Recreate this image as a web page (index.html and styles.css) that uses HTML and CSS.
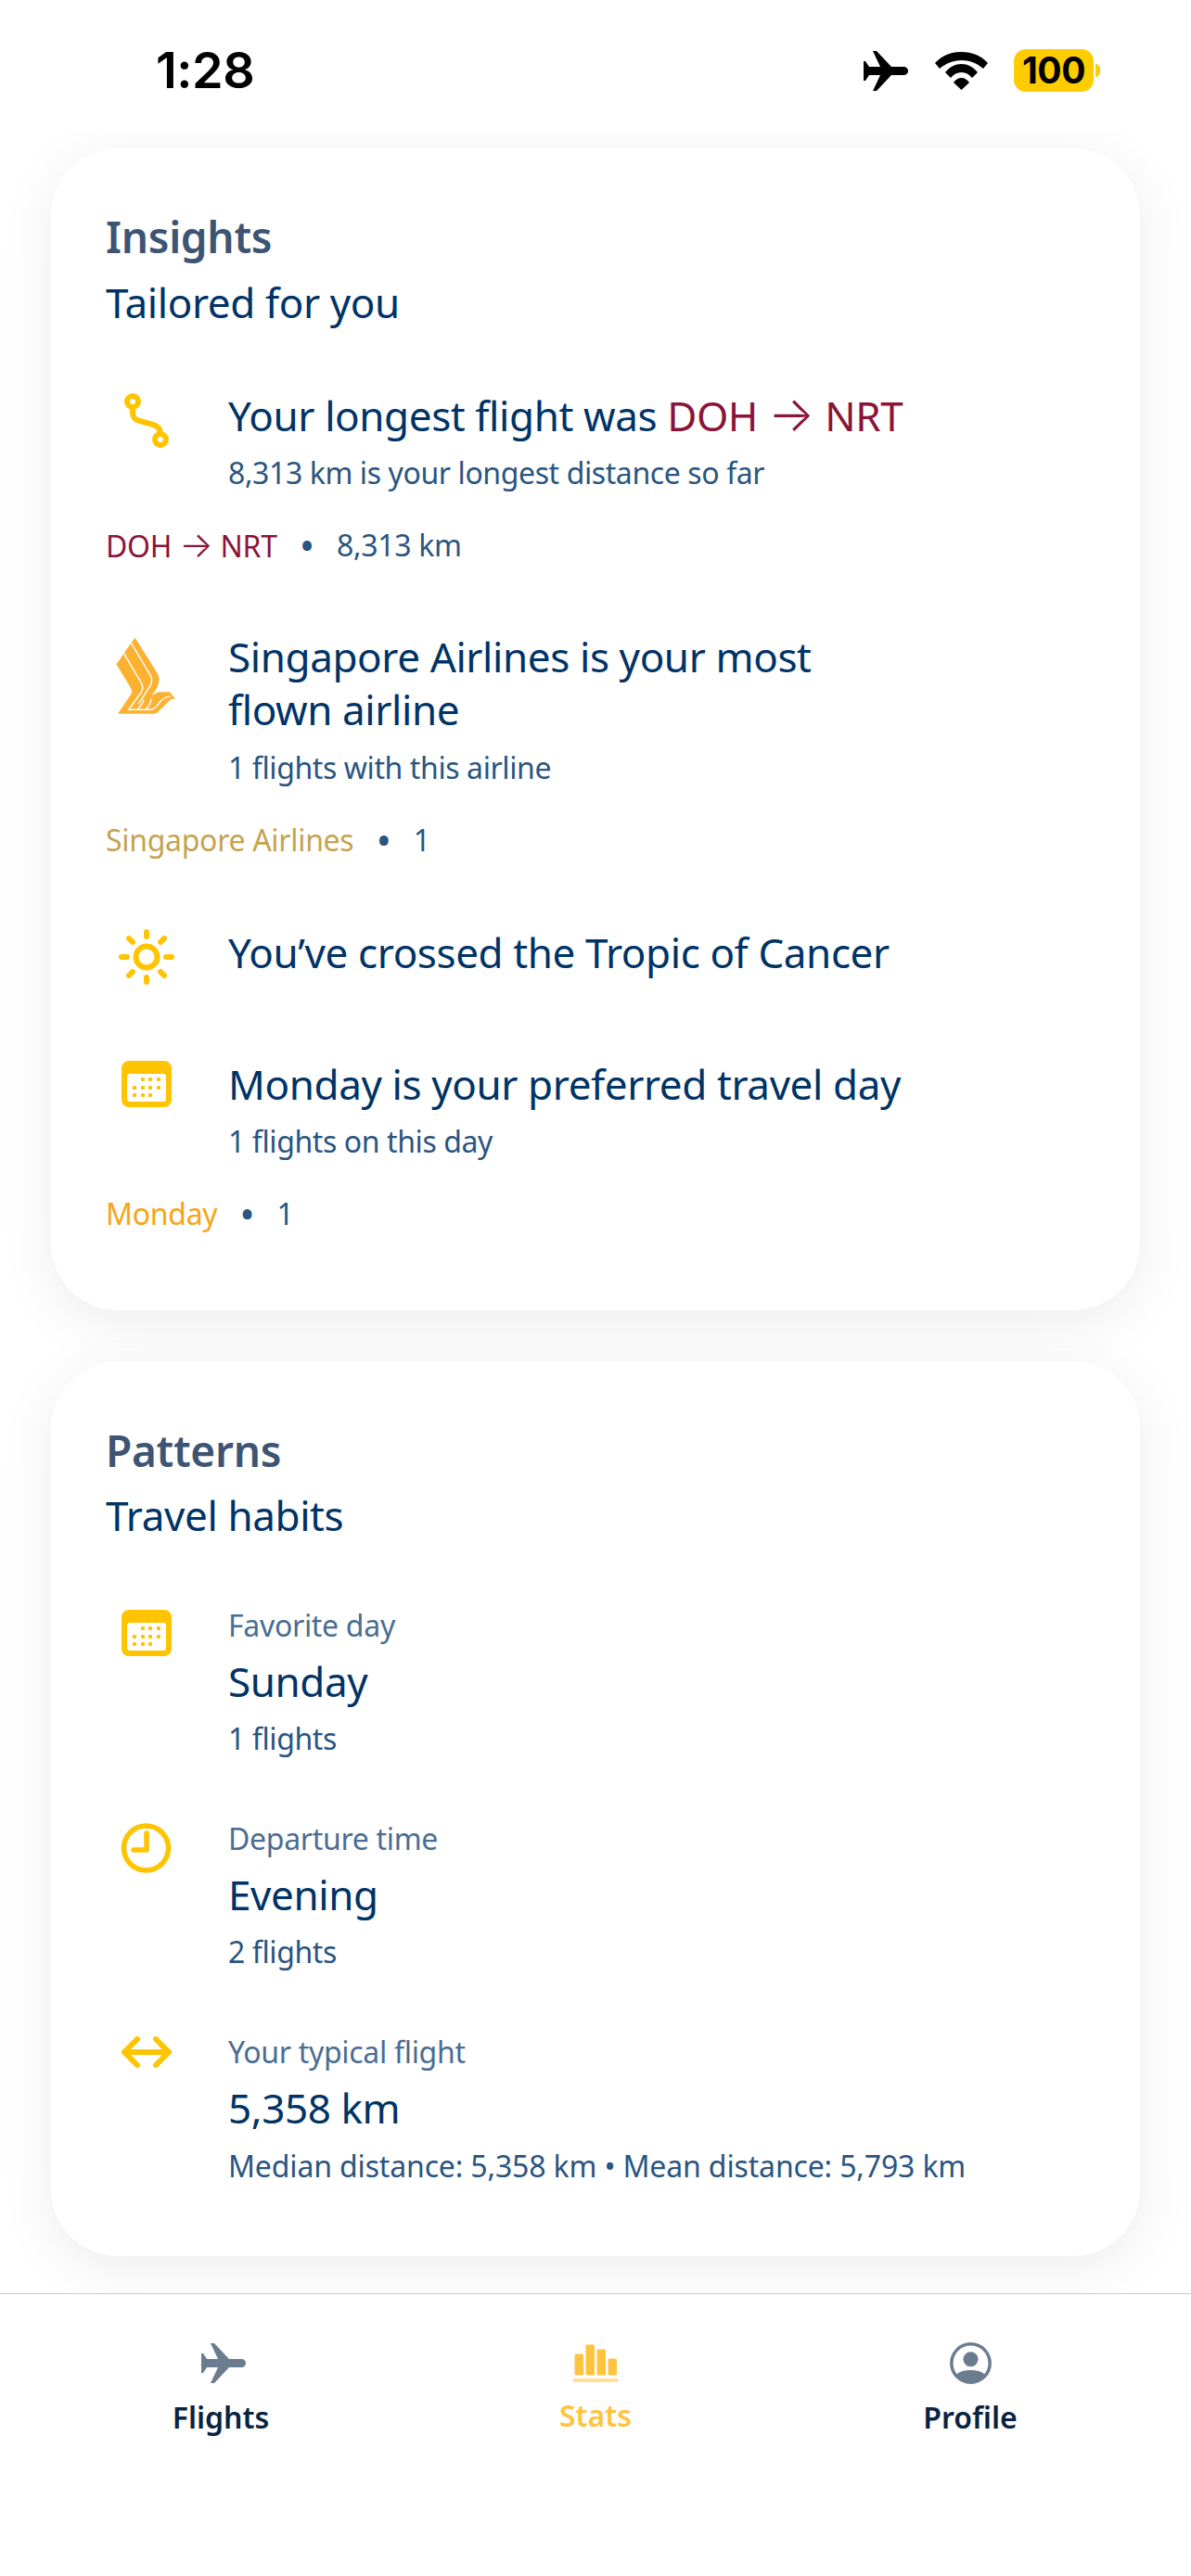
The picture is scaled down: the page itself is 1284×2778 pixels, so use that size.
FILE: index.html
```html
<!DOCTYPE html>
<html lang="en">
<head>
<meta charset="utf-8">
<title>Stats</title>
<link rel="stylesheet" href="styles.css">
</head>
<body>
<div class="app">
  <header class="status">
    <span class="time">1:28</span>
    <div class="status-icons">
      <svg class="st-plane" viewBox="0 0 50 45"><path d="M11 1h4l16 17h13c3 0 5 2 5 4.500S47 27 44 27H31L15 44h-4l8-17H7l-4 6H1V12h2l4 6h12z"/></svg>
      <svg class="st-wifi" viewBox="0 0 57 41"><path d="M0 12C7 4 17 0 28.500 0S50 4 57 12l-5 6C45 12 37 9 28.500 9S12 12 5 18zM11 22c5-6 11-9 17.500-9S41 16 46 22l-6 6c-3-4-7-6-11.500-6S20 24 17 28zM20 33c2-3 5-5 8.500-5s6.500 2 8.500 5l-8.500 8z"/></svg>
      <span class="battery">100</span>
      <span class="battery-nub"></span>
    </div>
  </header>

  <main class="scroll">
    <section class="card card-insights">
      <h2 class="card-title">Insights</h2>
      <p class="card-sub">Tailored for you</p>

      <div class="row row-a">
        <div class="icon icon-top">
          <svg width="50" height="60" viewBox="0 0 50 60" fill="none" stroke="#ffc400" stroke-width="6"><circle cx="10" cy="10" r="6"/><circle cx="40" cy="51" r="6"/><path d="M10 16v6c0 6 3 8 8 9l14 4c5 1.500 8 4 8 10"/></svg>
        </div>
        <div class="body">
          <div class="title">Your longest flight was <span class="maroon">DOH <span class="arrow">→</span> NRT</span></div>
          <div class="sub sub-mid">8,313 km is your longest distance so far</div>
        </div>
      </div>
      <div class="chip"><span class="maroon">DOH <span class="arrow">→</span> NRT</span><span class="dot">•</span><span>8,313 km</span></div>

      <div class="row row-b">
        <div class="icon">
          <svg width="90" height="100" viewBox="0 0 270 300"><path fill="#fdb131" d="M97 20 172 140Q182 160 170 185L150 215Q165 200 185 200H212L230 222 216 224 170 268Q165 272 155 272H40L85 205Q88 195 82 185L35 108 48 90 60 72 72 55 84 38Z"/><path fill="none" stroke="#fff" stroke-width="4.500" d="M84 38 148 145Q156 160 148 178L108 240M60 72 118 170Q126 185 118 200L76 258H150Q165 255 180 232 190 218 215 214M132 258Q150 240 150 222M105 258Q122 240 126 226"/></svg>
        </div>
        <div class="body">
          <div class="title title-tall">Singapore Airlines is your most<br>flown airline</div>
          <div class="sub sub-mid">1 flights with this airline</div>
        </div>
      </div>
      <div class="chip"><span class="gold">Singapore Airlines</span><span class="dot">•</span><span>1</span></div>

      <div class="row row-c">
        <div class="icon icon-top">
          <svg width="60" height="60" viewBox="0 0 60 60" fill="none" stroke="#ffc400" stroke-width="6" stroke-linecap="round"><circle cx="30" cy="30" r="11.500"/><path d="M30 3v5M30 52v5M3 30h6M51 30h6M11 10l4 4M49 10l-4 4M11 50l4-4M49 50l-4-4"/></svg>
        </div>
        <div class="body"><div class="title">You’ve crossed the Tropic of Cancer</div></div>
      </div>

      <div class="row row-d">
        <div class="icon icon-top">
          <svg width="54" height="50" viewBox="0 0 54 50"><use href="#cal"/></svg>
        </div>
        <div class="body">
          <div class="title">Monday is your preferred travel day</div>
          <div class="sub sub-mid">1 flights on this day</div>
        </div>
      </div>
      <div class="chip"><span class="orange">Monday</span><span class="dot">•</span><span>1</span></div>
    </section>

    <section class="card card-patterns">
      <h2 class="card-title">Patterns</h2>
      <p class="card-sub">Travel habits</p>

      <div class="stat stat-first">
        <div class="icon icon-top">
          <svg width="54" height="50" viewBox="0 0 54 50"><use href="#cal"/></svg>
        </div>
        <div class="body">
          <div class="label">Favorite day</div>
          <div class="title">Sunday</div>
          <div class="sub">1 flights</div>
        </div>
      </div>
      <div class="stat">
        <div class="icon icon-top">
          <svg width="56" height="54" viewBox="0 0 56 54" fill="none" stroke="#ffc400" stroke-width="5.500" stroke-linecap="round" stroke-linejoin="round"><circle cx="27.500" cy="27" r="24"/><path d="M28 11v18H14"/></svg>
        </div>
        <div class="body">
          <div class="label">Departure time</div>
          <div class="title">Evening</div>
          <div class="sub">2 flights</div>
        </div>
      </div>
      <div class="stat">
        <div class="icon icon-top">
          <svg width="54" height="34" viewBox="0 0 54 34" fill="none" stroke="#ffc400" stroke-width="6" stroke-linecap="round" stroke-linejoin="round"><path d="M3 17h48M17 3 3 17l14 14M37 3l14 14-14 14"/></svg>
        </div>
        <div class="body">
          <div class="label">Your typical flight</div>
          <div class="title">5,358 km</div>
          <div class="sub sub-long">Median distance: 5,358 km • Mean distance: 5,793 km</div>
        </div>
      </div>
    </section>
  </main>

  <nav class="tabs">
    <div class="tab">
      <svg class="tab-icon tab-icon-plane" width="50" height="45" viewBox="0 0 50 45" fill="#6b7c8e"><path d="M11 1h4l16 17h13c3 0 5 2 5 4.500S47 27 44 27H31L15 44h-4l8-17H7l-4 6H1V12h2l4 6h12z"/></svg>
      <span class="tab-label">Flights</span>
    </div>
    <div class="tab tab-active">
      <svg class="tab-icon" width="50" height="45" viewBox="0 0 50 45" fill="#ffc33f"><rect x="2.500" y="12.500" width="9.500" height="23" rx="1.500"/><rect x="14.500" y="2.500" width="9.500" height="33" rx="1.500"/><rect x="26.500" y="7.500" width="9.500" height="28" rx="1.500"/><rect x="38.500" y="17.500" width="9.500" height="18" rx="1.500"/><rect x=".5" y="39" width="49" height="4" rx="2" opacity=".55"/></svg>
      <span class="tab-label">Stats</span>
    </div>
    <div class="tab">
      <svg class="tab-icon" width="45" height="45" viewBox="0 0 45 45"><circle cx="22.500" cy="22.500" r="20.700" fill="none" stroke="#6b7c8e" stroke-width="3.500"/><circle cx="22.500" cy="18.300" r="8" fill="#6b7c8e"/><path d="M5.700 36C9 32 15 30 22.500 30S36 32 39.300 36A22.500 22.500 0 0 1 5.700 36z" fill="#6b7c8e"/></svg>
      <span class="tab-label">Profile</span>
    </div>
  </nav>
</div>

<svg class="defs" width="0" height="0">
  <symbol id="cal" viewBox="0 0 54 50">
    <path fill="#ffc400" fill-rule="evenodd" d="M8 0h38a8 8 0 0 1 8 8v34a8 8 0 0 1-8 8H8a8 8 0 0 1-8-8V8a8 8 0 0 1 8-8zm-2 17v24a3 3 0 0 0 3 3h36a3 3 0 0 0 3-3V17a3 3 0 0 0-3-3H9a3 3 0 0 0-3 3z"/>
    <g fill="#ffc400"><rect x="21" y="18" width="4" height="4" rx="1"/><rect x="29" y="18" width="4" height="4" rx="1"/><rect x="38" y="18" width="4" height="4" rx="1"/><rect x="12" y="27" width="4" height="4" rx="1"/><rect x="21" y="27" width="4" height="4" rx="1"/><rect x="29" y="27" width="4" height="4" rx="1"/><rect x="38" y="27" width="4" height="4" rx="1"/><rect x="12" y="35" width="4" height="4" rx="1"/><rect x="21" y="35" width="4" height="4" rx="1"/><rect x="29" y="35" width="4" height="4" rx="1"/></g>
  </symbol>
</svg>
</body>
</html>
```
FILE: styles.css
```css
* { box-sizing: border-box; }
html, body { margin: 0; padding: 0; background: #fff; }
body { font-family: "Noto Sans", "Open Sans", sans-serif; color: #003366; }
h2, p { margin: 0; }
.app { width: 1284px; height: 2778px; display: flex; flex-direction: column; overflow: hidden; }
.defs { position: absolute; }

.status { height: 141px; flex: none; display: flex; justify-content: space-between; align-items: flex-start; padding: 43px 98px 0 168px; background: #fff; }
.time { font: 600 54px/66px Inter, sans-serif; color: #000; letter-spacing: -0.5px; }
.status-icons { display: flex; align-items: center; padding-top: 10px; }
.st-plane { width: 50px; height: 45px; fill: #000; }
.st-wifi { width: 57px; height: 41px; fill: #000; margin-left: 28px; }
.battery { width: 86px; height: 46px; margin-left: 28px; background: #ffcc00; border-radius: 13px; font: 700 39px/46px Inter, sans-serif; color: #000; text-align: center; letter-spacing: -0.5px; }
.battery-nub { width: 5px; height: 14px; margin-left: 2px; background: #ffcc00; border-radius: 0 7px 7px 0; }

.scroll { flex: none; height: 2332px; padding: 19px 55px 0; overflow: hidden; background: #fff; }
.card { background: #fff; border-radius: 72px; padding: 0 59px; box-shadow: 0 12px 60px rgba(0, 0, 0, 0.08); }
.card-insights { height: 1253px; padding-top: 67px; }
.card-patterns { height: 965px; margin-top: 55px; padding-top: 68px; }
.card-title { font-size: 46px; line-height: 56px; font-weight: 600; letter-spacing: -0.3px; color: #3d5475; }
.card-sub { font-size: 44px; line-height: 56px; margin-top: 15px; letter-spacing: -0.4px; color: #003366; }
.card-patterns .card-sub { margin-top: 14px; }

.row { display: flex; }
.row-a { margin-top: 66px; }
.row-b { margin-top: 71px; }
.row-c { margin-top: 73px; }
.row-d { margin-top: 79px; }
.icon { width: 88px; margin-right: 44px; flex: none; display: flex; justify-content: center; align-items: flex-start; }
.icon-top { padding-top: 3px; }
.title { font-size: 44px; line-height: 56px; letter-spacing: -0.4px; color: #003366; }
.title-tall { line-height: 57px; }
.sub { font-size: 32px; line-height: 40px; margin-top: 12px; letter-spacing: -0.4px; color: #2a5580; }
.sub-mid { margin-top: 14px; }
.label { font-size: 32px; line-height: 40px; letter-spacing: -0.3px; color: #4a6d93; }
.chip { display: flex; font-size: 32px; line-height: 40px; margin-top: 38px; letter-spacing: -0.3px; color: #2a5580; }
.dot { font-size: 44px; margin: 0 24px; }
.maroon { color: #8a1538; }
.gold { color: #c4a44f; }
.orange { color: #f5a516; }
.arrow { font-family: Inter, sans-serif; font-weight: 300; font-size: 1.2em; line-height: 1; }

.stat { display: flex; margin-top: 68px; }
.stat-first { margin-top: 71px; }
.stat .title { margin-top: 12px; }
.stat .sub { margin-top: 14px; }
.stat .sub-long { margin-top: 15px; letter-spacing: -0.15px; }

.tabs { flex: 1; display: grid; grid-template-columns: repeat(3, 404px); padding: 0 36px; border-top: 1px solid #ccc; background: #fff; }
.tab { display: flex; flex-direction: column; align-items: center; padding-top: 52px; }
.tab-icon { height: 45px; flex: none; }
.tab-icon-plane { margin-left: 5px; }
.tab-label { font-size: 32px; line-height: 40px; font-weight: 600; margin-top: 16px; color: #0a2340; }
.tab-active .tab-label { color: #ffc33f; margin-top: 14px; }
```
